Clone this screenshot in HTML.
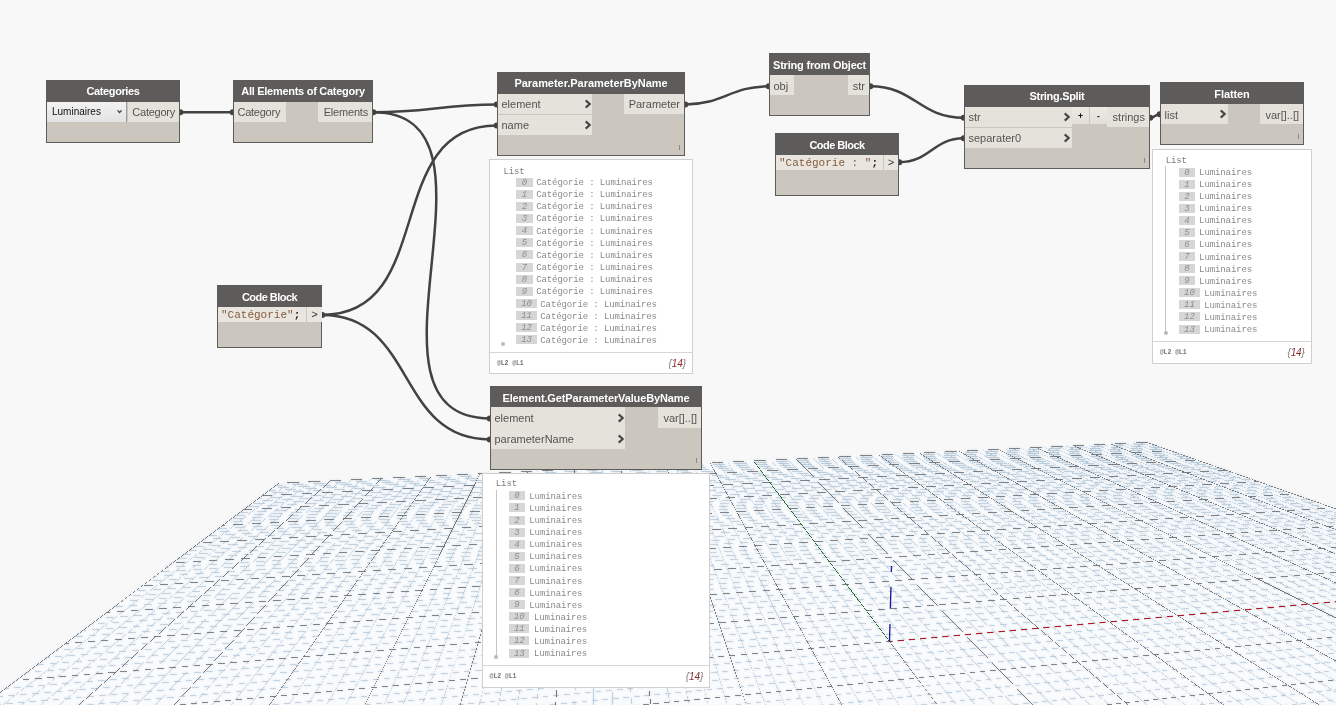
<!DOCTYPE html>
<html><head><meta charset="utf-8"><title>Dynamo</title><style>
html,body{margin:0;padding:0;}
body{width:1336px;height:705px;overflow:hidden;background:#f8f8f8;position:relative;font-family:"Liberation Sans",sans-serif;}
.abs{position:absolute;}
.node{will-change:transform;position:absolute;background:#cbc6be;border:1px solid #5e5c5a;box-sizing:border-box;}
.hdr{position:absolute;left:0;top:0;right:0;background:#5e5c5a;color:#fff;font-weight:bold;font-size:11px;text-align:center;white-space:nowrap;}
.port{position:absolute;background:#e5e2dc;color:#555350;font-size:11px;white-space:nowrap;box-sizing:border-box;}
.pin{padding-left:3.5px;}
.pout{text-align:right;padding-right:4px;}
.code{position:absolute;background:#e9e6e0;font-family:"Liberation Mono",monospace;font-size:11px;white-space:pre;color:#222;box-sizing:border-box;}
.str{color:#875a3a;}
.bub{will-change:transform;position:absolute;background:#fff;border:1px solid #cfcfcf;box-sizing:border-box;font-family:"Liberation Mono",monospace;font-size:9px;color:#8a8a8a;letter-spacing:-0.1px;}
.bub .sep{position:absolute;left:0;right:0;height:1px;background:#d6d6d6;}
.bub .t{position:absolute;white-space:pre;line-height:10px;height:10px;}
.bub .ix{position:absolute;background:#d6d6d6;color:#8e8e8e;font-style:italic;text-align:center;height:9px;line-height:11px;}
.bub .lv{position:absolute;font-weight:bold;font-size:6.5px;color:#727272;white-space:pre;}
.bub .cnt{position:absolute;font-family:"Liberation Sans",sans-serif;font-style:italic;font-size:10px;color:#777;white-space:pre;text-align:right;}
.bub .cnt b{font-weight:normal;color:#8a2d2d;}
.lace{position:absolute;width:1px;height:5px;background:#8d8a85;}
</style></head><body>
<svg class="abs" style="left:0;top:0" width="1336" height="705" shape-rendering="crispEdges"><defs><filter id="gb" x="0" y="0" width="100%" height="100%" filterUnits="userSpaceOnUse" primitiveUnits="userSpaceOnUse"><feGaussianBlur stdDeviation="0.8" result="b"/><feComposite in="SourceGraphic" in2="b" operator="arithmetic" k1="0" k2="0.5" k3="0.5" k4="0"/></filter><filter id="gb2" x="0" y="0" width="100%" height="100%" filterUnits="userSpaceOnUse" primitiveUnits="userSpaceOnUse"><feGaussianBlur stdDeviation="0.8" result="b"/><feComposite in="SourceGraphic" in2="b" operator="arithmetic" k1="0" k2="0.75" k3="0.25" k4="0"/></filter></defs><g filter="url(#gb)"><polygon points="278.9,483.2 1146.7,442.3 1340,510.7 1340,710 -4,710 -4,696.3" fill="#f9fbfd" shape-rendering="auto"/><path fill="#a0bbd0" stroke="none" d="M-6.52 711.74L289.23 482.45L289.57 482.89L-6.18 712.18ZM12.89 711.69L299.64 481.96L299.98 482.39L13.23 712.12ZM32.29 711.64L310.00 481.48L310.35 481.90L32.64 712.06ZM51.69 711.59L320.32 480.99L320.68 481.41L52.05 712.01ZM90.23 711.72L340.84 480.03L341.21 480.44L90.60 712.13ZM109.63 711.67L351.03 479.56L351.41 479.95L110.01 712.07ZM129.03 711.62L361.18 479.08L361.57 479.47L129.41 712.01ZM148.20 711.81L371.29 478.61L371.69 478.99L148.59 712.19ZM186.99 711.71L391.39 477.67L391.80 478.03L187.40 712.07ZM206.38 711.66L401.38 477.21L401.80 477.56L206.80 712.01ZM225.76 711.61L411.33 476.74L411.76 477.08L226.19 711.95ZM244.97 711.80L421.23 476.28L421.67 476.61L245.41 712.13ZM283.75 711.70L440.93 475.37L441.39 475.67L284.20 712.01ZM303.13 711.66L450.72 474.91L451.18 475.20L303.59 711.95ZM322.37 711.84L460.47 474.46L460.94 474.74L322.85 712.12ZM341.76 711.80L470.18 474.01L470.66 474.27L342.24 712.06ZM380.51 711.71L489.49 473.12L489.99 473.34L381.01 711.93ZM399.79 711.89L499.08 472.67L499.59 472.88L400.30 712.10ZM419.17 711.85L508.64 472.23L509.16 472.42L419.69 712.04ZM438.55 711.81L518.16 471.79L518.68 471.97L439.07 711.98ZM477.29 711.72L537.09 470.92L537.63 471.05L477.83 711.85ZM496.61 711.91L546.50 470.49L547.04 470.60L497.15 712.02ZM515.98 711.87L555.88 470.06L556.42 470.15L516.53 711.96ZM535.36 711.82L565.21 469.63L565.76 469.70L535.90 711.89ZM574.08 711.97L583.78 468.78L584.33 468.80L574.63 711.99ZM593.45 711.93L593.01 468.35L593.56 468.35L594.00 711.93ZM612.82 711.89L602.21 467.93L602.76 467.91L613.36 711.86ZM632.18 711.85L611.37 467.51L611.91 467.46L632.73 711.80ZM670.94 711.99L629.58 466.68L630.12 466.58L671.48 711.90ZM690.30 711.95L638.64 466.26L639.17 466.15L690.84 711.84ZM1323.59 711.69L1343.58 709.36L1343.65 709.91L1323.66 712.24ZM709.66 711.91L647.66 465.85L648.19 465.71L710.20 711.77ZM1229.06 711.72L1343.69 698.68L1343.75 699.23L1229.12 712.26ZM729.02 711.87L656.65 465.43L657.17 465.28L729.55 711.71ZM1134.96 711.70L1343.78 688.48L1343.84 689.03L1135.02 712.25ZM767.82 712.01L674.52 464.61L675.03 464.42L768.33 711.82ZM946.39 711.71L1343.96 669.41L1344.02 669.96L946.45 712.25ZM787.17 711.97L683.40 464.20L683.91 463.99L787.68 711.75ZM852.36 711.69L1343.68 660.51L1343.74 661.06L852.42 712.23ZM806.53 711.92L692.25 463.79L692.75 463.56L807.03 711.69ZM757.90 711.71L1343.77 651.95L1343.83 652.50L757.96 712.26ZM826.00 712.11L701.07 463.39L701.56 463.14L826.49 711.86ZM663.92 711.69L1343.86 643.73L1343.91 644.28L663.97 712.24ZM864.71 712.02L718.61 462.58L719.08 462.30L865.18 711.74ZM475.55 711.70L1343.68 628.29L1343.74 628.84L475.60 712.25ZM884.06 711.97L727.33 462.17L727.80 461.88L884.52 711.68ZM381.64 711.68L1343.77 620.99L1343.82 621.54L381.70 712.23ZM903.40 711.93L736.02 461.77L736.47 461.46L903.86 711.62ZM287.25 711.71L1343.85 613.97L1343.90 614.52L287.30 712.26ZM922.91 712.11L744.67 461.37L745.12 461.05L923.36 711.79ZM193.39 711.69L1343.92 607.21L1343.97 607.76L193.44 712.24ZM961.61 712.02L761.88 460.57L762.31 460.23L962.04 711.67ZM5.21 711.70L1343.76 594.43L1343.81 594.98L5.26 712.25ZM980.95 711.97L770.44 460.17L770.86 459.82L981.37 711.61ZM-7.89 704.73L1343.83 588.36L1343.88 588.91L-7.84 705.28ZM1000.49 712.15L778.96 459.78L779.37 459.41L1000.90 711.79ZM-5.79 696.72L1343.90 582.50L1343.95 583.05L-5.75 697.27ZM1019.83 712.10L787.45 459.38L787.86 459.01L1020.24 711.73ZM5.54 688.21L1343.97 576.84L1344.02 577.39L5.59 688.76ZM1058.51 712.00L804.35 458.60L804.73 458.21L1058.90 711.62ZM26.97 672.12L1343.82 566.09L1343.87 566.64L27.01 672.66ZM1078.09 712.19L812.74 458.20L813.13 457.81L1078.47 711.79ZM37.11 664.50L1343.89 560.97L1343.93 561.52L37.15 665.05ZM1097.43 712.14L821.11 457.81L821.48 457.41L1097.80 711.73ZM46.89 657.16L1343.95 556.00L1344.00 556.55L46.93 657.71ZM1116.76 712.09L829.45 457.42L829.81 457.01L1117.13 711.68ZM56.33 650.07L1343.75 551.21L1343.79 551.76L56.37 650.61ZM1155.42 711.99L846.03 456.65L846.38 456.23L1155.77 711.56ZM74.27 636.59L1343.88 542.03L1343.92 542.58L74.31 637.14ZM1175.04 712.17L854.27 456.26L854.62 455.83L1175.38 711.74ZM82.79 630.19L1343.94 537.64L1343.98 538.19L82.83 630.74ZM1194.37 712.12L862.49 455.88L862.83 455.44L1194.70 711.68ZM91.04 623.99L1343.75 533.40L1343.78 533.95L91.08 624.54ZM1213.69 712.07L870.67 455.50L871.00 455.06L1214.02 711.63ZM99.03 618.00L1343.81 529.26L1343.85 529.81L99.07 618.54ZM1252.67 712.20L886.95 454.74L887.27 454.29L1252.98 711.75ZM114.27 606.55L1343.92 521.33L1343.96 521.88L114.31 607.10ZM1271.99 712.15L895.05 454.36L895.36 453.90L1272.30 711.69ZM121.54 601.09L1343.98 517.53L1344.02 518.08L121.58 601.64ZM1291.31 712.10L903.11 453.98L903.42 453.52L1291.62 711.64ZM128.59 595.79L1343.80 513.86L1343.84 514.40L128.63 596.34ZM1310.63 712.04L911.15 453.60L911.45 453.14L1310.93 711.58ZM135.44 590.65L1341.08 510.44L1341.12 510.99L135.48 591.20ZM1343.64 708.49L927.13 452.85L927.42 452.38L1343.92 708.02ZM148.54 580.81L1324.51 504.61L1324.54 505.16L148.58 581.36ZM1343.83 697.09L935.08 452.48L935.37 452.01L1344.11 696.62ZM154.82 576.10L1316.49 501.79L1316.53 502.34L154.85 576.65ZM1343.66 686.03L943.00 452.11L943.28 451.63L1343.94 685.55ZM160.92 571.52L1308.65 499.03L1308.69 499.58L160.95 572.07ZM1343.85 675.70L950.90 451.74L951.17 451.26L1344.12 675.22ZM166.85 567.07L1300.98 496.33L1301.01 496.88L166.88 567.61ZM1343.86 656.25L966.59 451.00L966.86 450.52L1344.13 655.77ZM178.24 558.51L1286.12 491.10L1286.15 491.65L178.27 559.06ZM1343.71 647.09L974.40 450.64L974.66 450.15L1343.97 646.60ZM183.70 554.41L1278.92 488.56L1278.95 489.11L183.74 554.96ZM1343.56 638.33L982.18 450.27L982.44 449.78L1343.82 637.84ZM189.03 550.41L1271.87 486.08L1271.90 486.63L189.06 550.96ZM1343.73 630.10L989.93 449.91L990.18 449.42L1343.98 629.61ZM194.22 546.51L1264.96 483.65L1264.99 484.20L194.25 547.06ZM1343.75 614.49L1005.35 449.18L1005.60 448.69L1343.99 614.00ZM204.21 539.01L1251.55 478.93L1251.59 479.48L204.24 539.56ZM1343.61 607.09L1013.02 448.82L1013.26 448.33L1343.85 606.59ZM209.02 535.40L1245.05 476.65L1245.08 477.19L209.05 535.94ZM1343.77 600.11L1020.67 448.46L1020.90 447.96L1344.00 599.61ZM213.71 531.87L1238.68 474.40L1238.71 474.95L213.74 532.42ZM1343.64 593.27L1028.28 448.10L1028.51 447.60L1343.87 592.77ZM218.29 528.43L1232.42 472.20L1232.45 472.75L218.32 528.98ZM1343.66 580.47L1043.43 447.39L1043.65 446.89L1343.88 579.97ZM227.12 521.80L1220.28 467.92L1220.31 468.47L227.15 522.35ZM1343.80 574.48L1050.97 447.04L1051.19 446.53L1344.02 573.98ZM231.38 518.60L1214.37 465.85L1214.40 466.40L231.41 519.15ZM1343.68 568.59L1058.47 446.69L1058.69 446.18L1343.89 568.08ZM235.54 515.47L1208.58 463.81L1208.61 464.36L235.57 516.02ZM1343.81 563.01L1065.96 446.33L1066.17 445.83L1344.03 562.51ZM239.61 512.42L1202.90 461.81L1202.92 462.36L239.64 512.97ZM1343.83 552.32L1080.84 445.63L1081.05 445.12L1344.03 551.81ZM247.48 506.51L1191.83 457.91L1191.86 458.46L247.51 507.06ZM1343.71 547.20L1088.25 445.29L1088.45 444.77L1343.92 546.69ZM251.28 503.65L1186.45 456.02L1186.48 456.57L251.31 504.20ZM1343.84 542.33L1095.63 444.94L1095.83 444.43L1344.04 541.82ZM255.00 500.86L1181.17 454.16L1181.19 454.71L255.03 501.41ZM1343.73 537.53L1102.98 444.59L1103.18 444.08L1343.93 537.02ZM258.64 498.13L1175.97 452.33L1176.00 452.88L258.67 498.68ZM1343.74 528.47L1117.61 443.91L1117.80 443.39L1343.94 527.96ZM265.69 492.83L1165.86 448.77L1165.88 449.32L265.72 493.38ZM1343.86 524.19L1124.89 443.56L1125.08 443.05L1344.05 523.68ZM269.11 490.27L1160.93 447.04L1160.96 447.59L269.13 490.82ZM1343.76 519.96L1132.14 443.22L1132.32 442.70L1343.94 519.44ZM272.45 487.76L1156.09 445.33L1156.11 445.88L272.48 488.31ZM1343.87 515.94L1139.36 442.88L1139.55 442.36L1344.06 515.42ZM275.73 485.30L1151.33 443.66L1151.35 444.21L275.75 485.85Z"/></g><g filter="url(#gb2)"><path fill="#646c72" stroke="none" d="M1040.45 711.74L1343.88 678.75L1343.93 679.27L1040.50 712.26ZM569.48 711.73L1343.94 635.85L1343.99 636.38L569.53 712.26ZM99.03 711.73L1343.68 600.73L1343.73 601.26L99.07 712.26ZM16.45 680.02L1343.76 571.40L1343.80 571.93L16.50 680.55ZM65.45 643.23L1343.81 546.56L1343.85 547.09L65.49 643.75ZM106.77 612.19L1343.87 525.25L1343.90 525.78L106.81 612.72ZM142.09 585.67L1332.70 507.50L1332.73 508.03L142.12 586.20ZM172.62 562.74L1293.47 493.70L1293.50 494.23L172.65 563.27ZM199.28 542.72L1258.19 481.28L1258.22 481.81L199.31 543.25ZM222.76 525.09L1226.29 470.05L1226.32 470.58L222.79 525.62ZM243.59 509.44L1197.31 459.85L1197.34 460.38L243.62 509.97ZM262.21 495.46L1170.87 450.55L1170.90 451.08L262.23 495.99ZM278.94 482.90L1146.65 442.02L1146.67 442.55L278.96 483.43Z"/><path fill="#565e64" stroke="none" d="M-7.97 698.29L278.78 482.94L279.12 483.38L-7.63 698.74ZM70.83 711.77L330.60 480.51L330.97 480.93L71.20 712.19ZM167.59 711.75L381.36 478.14L381.77 478.52L168.00 712.13ZM264.36 711.75L431.10 475.82L431.55 476.14L264.81 712.07ZM361.13 711.75L479.85 473.56L480.35 473.81L361.63 712.00ZM457.92 711.76L527.64 471.35L528.18 471.51L458.45 711.92ZM554.72 711.78L574.51 469.20L575.07 469.25L555.28 711.83ZM651.54 711.80L620.49 467.09L621.04 467.02L652.09 711.73ZM748.45 712.06L665.59 465.02L666.12 464.84L748.98 711.88ZM845.35 712.07L709.85 462.98L710.35 462.72L845.84 711.80ZM942.26 712.07L753.29 460.97L753.73 460.64L942.70 711.73ZM1039.17 712.06L795.91 458.99L796.32 458.60L1039.58 711.67ZM1136.09 712.04L837.75 457.04L838.12 456.61L1136.45 711.62ZM1233.02 712.02L878.82 455.12L879.15 454.67L1233.34 711.57ZM1330.31 712.23L919.15 453.23L919.45 452.76L1330.61 711.75ZM1343.69 665.66L958.76 451.37L959.03 450.88L1343.96 665.17ZM1343.59 622.06L997.66 449.55L997.90 449.05L1343.84 621.56ZM1343.78 586.82L1035.87 447.75L1036.10 447.24L1344.01 586.31ZM1343.69 557.53L1073.41 445.99L1073.62 445.47L1343.91 557.01ZM1343.85 532.98L1110.30 444.25L1110.50 443.73L1344.05 532.46ZM1343.77 511.96L1146.56 442.55L1146.75 442.02L1343.95 511.43Z"/></g><path fill="#1f6428" d="M889.25 641.69L753.26 460.99L753.76 460.62L889.75 641.31Z"/><path d="M889.50 641.50L1343.86 600.98" stroke-dasharray="6.329 4.928" stroke-dashoffset="3.165" stroke="#b8101f" stroke-width="1.15" shape-rendering="auto"/><path d="M889.5 641.5L891.5 566" stroke="#1c1ca0" stroke-width="1.35" fill="none" stroke-dasharray="17.5 15.5 21.5 15 6.5 0" shape-rendering="auto"/></svg>
<svg class="abs" style="left:0;top:0" width="1336" height="705"><g fill="none" stroke="#424242" stroke-width="2.5" stroke-linecap="round"><path d="M180.3 112.2C203.9 112.2 209.1 112.2 232.7 112.2"/><path d="M373.3 112.2C428.9 112.2 441.1 104.6 496.7 104.6"/><path d="M373.3 112.2C520.7 112.2 342.3 418.4 489.7 418.4"/><path d="M322.3 314.9C438.1 314.9 380.9 125.6 496.7 125.6"/><path d="M322.3 314.9C416.2 314.9 395.8 439.4 489.7 439.4"/><path d="M685.3 104.4C723.7 104.4 730.3 86.3 768.7 86.3"/><path d="M870.3 86.3C914.7 86.3 919.3 117.8 963.7 117.8"/><path d="M899.3 162.2C930.2 162.2 932.8 138.3 963.7 138.3"/><path d="M1150.3 117.8C1154.8 117.8 1155.2 114.3 1159.7 114.3"/></g><g fill="#424242"><circle cx="1150.3" cy="117.8" r="3"/><circle cx="322.3" cy="314.9" r="3"/><circle cx="232.7" cy="112.2" r="3"/><circle cx="496.7" cy="125.6" r="3"/><circle cx="489.7" cy="439.4" r="3"/><circle cx="963.7" cy="117.8" r="3"/><circle cx="899.3" cy="162.2" r="3"/><circle cx="963.7" cy="138.3" r="3"/><circle cx="685.3" cy="104.4" r="3"/><circle cx="870.3" cy="86.3" r="3"/><circle cx="180.3" cy="112.2" r="3"/><circle cx="496.7" cy="104.6" r="3"/><circle cx="768.7" cy="86.3" r="3"/><circle cx="1159.7" cy="114.3" r="3"/><circle cx="489.7" cy="418.4" r="3"/><circle cx="373.3" cy="112.2" r="3"/></g></svg>
<div class="node" style="left:46px;top:80px;width:134px;height:63px"><div class="hdr" style="height:21px;line-height:21px;letter-spacing:-0.38px">Categories</div><div class="port pout" style="right:0;top:21px;width:51px;height:20px;line-height:20px"><span style="letter-spacing:-0.25px">Category</span></div><div class="abs" style="left:0;top:21px;width:80px;height:20px;background:linear-gradient(#f2f2f2,#e3e3e3);border-right:1px solid #a29e97;box-sizing:border-box;font-size:10px;line-height:19px;color:#111;padding-left:5px;white-space:nowrap">Luminaires<svg class="abs" style="left:69px;top:7px" width="7" height="6" viewBox="0 0 7 6"><path d="M1.6 1.4 L3.6 3.5 L5.6 1.4" fill="none" stroke="#3c3c3c" stroke-width="1.25"/></svg></div></div>
<div class="node" style="left:233px;top:80px;width:140px;height:63px"><div class="hdr" style="height:21px;line-height:21px;letter-spacing:-0.28px">All Elements of Category</div><div class="port pin" style="left:0;top:21px;width:52px;height:20px;line-height:20px"><span style="letter-spacing:-0.25px">Category</span></div><div class="port pout" style="right:0;top:21px;width:54px;height:20px;line-height:20px"><span style="letter-spacing:-0.2px">Elements</span></div></div>
<div class="node" style="left:497px;top:72px;width:188px;height:84px"><div class="hdr" style="height:21px;line-height:21px;letter-spacing:-0.04px">Parameter.ParameterByName</div><div class="port pin" style="left:0;top:21px;width:94px;height:20px;line-height:20px">element</div><svg class="abs" style="left:86px;top:26px" width="8" height="10" viewBox="0 0 8 10"><path d="M1.7 1.4 L5.7 5 L1.7 8.6" fill="none" stroke="#474543" stroke-width="2.1"/></svg><div class="port pin" style="left:0;top:42px;width:94px;height:20px;line-height:20px">name</div><svg class="abs" style="left:86px;top:47px" width="8" height="10" viewBox="0 0 8 10"><path d="M1.7 1.4 L5.7 5 L1.7 8.6" fill="none" stroke="#474543" stroke-width="2.1"/></svg><div class="port pout" style="right:0;top:21px;width:60px;height:20px;line-height:20px">Parameter</div><div class="lace" style="left:181px;top:72px"></div></div>
<div class="node" style="left:769px;top:53px;width:101px;height:63px"><div class="hdr" style="height:21px;line-height:23px;letter-spacing:-0.20px">String from Object</div><div class="port pin" style="left:0;top:21px;width:24px;height:20px;line-height:22px">obj</div><div class="port pout" style="right:0;top:21px;width:21px;height:20px;line-height:22px">str</div></div>
<div class="node" style="left:775px;top:133px;width:124px;height:63px"><div class="hdr" style="height:21px;line-height:23px;letter-spacing:-0.53px">Code Block</div><div class="code" style="left:0;top:21px;width:107px;height:15px;line-height:17px;padding-left:3px;overflow:hidden"><span class="str">"Catégorie : "</span><b>;</b></div><div class="code" style="left:108px;top:21px;width:14px;height:15px;line-height:17px;text-align:center;color:#333;overflow:hidden">&gt;</div></div>
<div class="node" style="left:964px;top:85px;width:186px;height:84px"><div class="hdr" style="height:21px;line-height:21px;letter-spacing:-0.31px">String.Split</div><div class="port pin" style="left:0;top:21px;width:107px;height:20px;line-height:20px">str</div><svg class="abs" style="left:98px;top:26px" width="8" height="10" viewBox="0 0 8 10"><path d="M1.7 1.4 L5.7 5 L1.7 8.6" fill="none" stroke="#474543" stroke-width="2.1"/></svg><div class="port pin" style="left:0;top:42px;width:107px;height:20px;line-height:20px">separater0</div><svg class="abs" style="left:98px;top:47px" width="8" height="10" viewBox="0 0 8 10"><path d="M1.7 1.4 L5.7 5 L1.7 8.6" fill="none" stroke="#474543" stroke-width="2.1"/></svg><div class="port pout" style="right:0;top:21px;width:42px;height:20px;line-height:20px">strings</div><div class="port" style="left:107px;top:21px;width:17px;height:17px;line-height:18px;text-align:center;color:#111;background:linear-gradient(#eceae5,#e2dfd9);font-size:8.5px;font-weight:bold">+</div><div class="port" style="left:125px;top:21px;width:17px;height:17px;line-height:18px;text-align:center;color:#111;background:linear-gradient(#eceae5,#e2dfd9);font-size:8.5px;font-weight:bold">-</div><div class="lace" style="left:179px;top:72px"></div></div>
<div class="node" style="left:1160px;top:82px;width:144px;height:63px"><div class="hdr" style="height:21px;line-height:23px;letter-spacing:-0.10px">Flatten</div><div class="port pin" style="left:0;top:21px;width:67px;height:20px;line-height:22px">list</div><svg class="abs" style="left:58px;top:26px" width="8" height="10" viewBox="0 0 8 10"><path d="M1.7 1.4 L5.7 5 L1.7 8.6" fill="none" stroke="#474543" stroke-width="2.1"/></svg><div class="port pout" style="right:0;top:21px;width:43px;height:20px;line-height:22px">var[]..[]</div><div class="lace" style="left:137px;top:51px"></div></div>
<div class="node" style="left:217px;top:285px;width:105px;height:63px"><div class="hdr" style="height:21px;line-height:23px;letter-spacing:-0.53px">Code Block</div><div class="code" style="left:0;top:21px;width:88px;height:15px;line-height:16px;padding-left:3px"><span class="str">"Catégorie"</span><b>;</b></div><div class="code" style="left:89px;top:21px;width:15px;height:15px;line-height:16px;text-align:center;color:#333">&gt;</div></div>
<div class="node" style="left:490px;top:386px;width:212px;height:84px"><div class="hdr" style="height:20px;line-height:22px;letter-spacing:-0.12px">Element.GetParameterValueByName</div><div class="port pin" style="left:0;top:20px;width:134px;height:21px;line-height:23px">element</div><svg class="abs" style="left:126px;top:26px" width="8" height="10" viewBox="0 0 8 10"><path d="M1.7 1.4 L5.7 5 L1.7 8.6" fill="none" stroke="#474543" stroke-width="2.1"/></svg><div class="port pin" style="left:0;top:41px;width:134px;height:21px;line-height:23px">parameterName</div><svg class="abs" style="left:126px;top:47px" width="8" height="10" viewBox="0 0 8 10"><path d="M1.7 1.4 L5.7 5 L1.7 8.6" fill="none" stroke="#474543" stroke-width="2.1"/></svg><div class="port pout" style="right:0;top:20px;width:43px;height:21px;line-height:23px">var[]..[]</div><div class="lace" style="left:205px;top:71px"></div></div>
<div class="bub" style="left:489px;top:159px;width:204px;height:215px"><div class="sep" style="top:192px"></div><div class="t" style="left:13.4px;top:6.7px;color:#7c7c7c">List</div><div class="abs" style="left:11.0px;top:181.8px;width:4px;height:4px;border-radius:2px;background:#b9b9b9"></div><div class="ix" style="left:26.2px;top:18px;width:16.5px">0</div><div class="t" style="left:46.2px;top:18px">Catégorie : Luminaires</div><div class="ix" style="left:26.2px;top:30px;width:16.5px">1</div><div class="t" style="left:46.2px;top:30px">Catégorie : Luminaires</div><div class="ix" style="left:26.2px;top:42px;width:16.5px">2</div><div class="t" style="left:46.2px;top:42px">Catégorie : Luminaires</div><div class="ix" style="left:26.2px;top:54px;width:16.5px">3</div><div class="t" style="left:46.2px;top:54px">Catégorie : Luminaires</div><div class="ix" style="left:26.2px;top:66px;width:16.5px">4</div><div class="t" style="left:46.2px;top:67px">Catégorie : Luminaires</div><div class="ix" style="left:26.2px;top:78px;width:16.5px">5</div><div class="t" style="left:46.2px;top:79px">Catégorie : Luminaires</div><div class="ix" style="left:26.2px;top:90px;width:16.5px">6</div><div class="t" style="left:46.2px;top:91px">Catégorie : Luminaires</div><div class="ix" style="left:26.2px;top:103px;width:16.5px">7</div><div class="t" style="left:46.2px;top:103px">Catégorie : Luminaires</div><div class="ix" style="left:26.2px;top:115px;width:16.5px">8</div><div class="t" style="left:46.2px;top:115px">Catégorie : Luminaires</div><div class="ix" style="left:26.2px;top:127px;width:16.5px">9</div><div class="t" style="left:46.2px;top:127px">Catégorie : Luminaires</div><div class="ix" style="left:26.2px;top:139px;width:20.6px">10</div><div class="t" style="left:50.3px;top:140px">Catégorie : Luminaires</div><div class="ix" style="left:26.2px;top:151px;width:20.6px">11</div><div class="t" style="left:50.3px;top:152px">Catégorie : Luminaires</div><div class="ix" style="left:26.2px;top:163px;width:20.6px">12</div><div class="t" style="left:50.3px;top:164px">Catégorie : Luminaires</div><div class="ix" style="left:26.2px;top:175px;width:20.6px">13</div><div class="t" style="left:50.3px;top:176px">Catégorie : Luminaires</div><div class="lv" style="left:7.0px;top:199.3px;line-height:9px"><span style="color:#8e8e8e">@</span>L2 <span style="color:#8e8e8e">@</span>L1</div><div class="cnt" style="right:6.0px;top:196.7px;line-height:13px">{<b>14</b>}</div></div>
<div class="bub" style="left:1152px;top:149px;width:160px;height:215px"><div class="sep" style="top:191px"></div><div class="t" style="left:12.7px;top:5.8px;color:#7c7c7c">List</div><div class="abs" style="left:12px;top:16px;width:1px;height:167px;background:#c4c4c4"></div><div class="abs" style="left:10.9px;top:180.6px;width:4px;height:4px;border-radius:2px;background:#b9b9b9"></div><div class="ix" style="left:26.0px;top:18px;width:15.6px">0</div><div class="t" style="left:46.1px;top:18px">Luminaires</div><div class="ix" style="left:26.0px;top:30px;width:15.6px">1</div><div class="t" style="left:46.1px;top:30px">Luminaires</div><div class="ix" style="left:26.0px;top:42px;width:15.6px">2</div><div class="t" style="left:46.1px;top:42px">Luminaires</div><div class="ix" style="left:26.0px;top:54px;width:15.6px">3</div><div class="t" style="left:46.1px;top:54px">Luminaires</div><div class="ix" style="left:26.0px;top:66px;width:15.6px">4</div><div class="t" style="left:46.1px;top:66px">Luminaires</div><div class="ix" style="left:26.0px;top:78px;width:15.6px">5</div><div class="t" style="left:46.1px;top:78px">Luminaires</div><div class="ix" style="left:26.0px;top:90px;width:15.6px">6</div><div class="t" style="left:46.1px;top:90px">Luminaires</div><div class="ix" style="left:26.0px;top:102px;width:15.6px">7</div><div class="t" style="left:46.1px;top:103px">Luminaires</div><div class="ix" style="left:26.0px;top:114px;width:15.6px">8</div><div class="t" style="left:46.1px;top:115px">Luminaires</div><div class="ix" style="left:26.0px;top:126px;width:15.6px">9</div><div class="t" style="left:46.1px;top:127px">Luminaires</div><div class="ix" style="left:26.0px;top:138px;width:20.8px">10</div><div class="t" style="left:51.3px;top:139px">Luminaires</div><div class="ix" style="left:26.0px;top:150px;width:20.8px">11</div><div class="t" style="left:51.3px;top:151px">Luminaires</div><div class="ix" style="left:26.0px;top:162px;width:20.8px">12</div><div class="t" style="left:51.3px;top:163px">Luminaires</div><div class="ix" style="left:26.0px;top:175px;width:20.8px">13</div><div class="t" style="left:51.3px;top:175px">Luminaires</div><div class="lv" style="left:6.8px;top:198.1px;line-height:9px"><span style="color:#8e8e8e">@</span>L2 <span style="color:#8e8e8e">@</span>L1</div><div class="cnt" style="right:6.2px;top:195.8px;line-height:13px">{<b>14</b>}</div></div>
<div class="bub" style="left:482px;top:473px;width:228px;height:215px"><div class="sep" style="top:191px"></div><div class="t" style="left:12.8px;top:5.4px;color:#7c7c7c">List</div><div class="abs" style="left:13px;top:16px;width:1px;height:167px;background:#c4c4c4"></div><div class="abs" style="left:11.2px;top:181.1px;width:4px;height:4px;border-radius:2px;background:#b9b9b9"></div><div class="ix" style="left:25.9px;top:17px;width:15.9px">0</div><div class="t" style="left:46.3px;top:18px">Luminaires</div><div class="ix" style="left:25.9px;top:29px;width:15.9px">1</div><div class="t" style="left:46.3px;top:30px">Luminaires</div><div class="ix" style="left:25.9px;top:42px;width:15.9px">2</div><div class="t" style="left:46.3px;top:42px">Luminaires</div><div class="ix" style="left:25.9px;top:54px;width:15.9px">3</div><div class="t" style="left:46.3px;top:54px">Luminaires</div><div class="ix" style="left:25.9px;top:66px;width:15.9px">4</div><div class="t" style="left:46.3px;top:66px">Luminaires</div><div class="ix" style="left:25.9px;top:78px;width:15.9px">5</div><div class="t" style="left:46.3px;top:78px">Luminaires</div><div class="ix" style="left:25.9px;top:90px;width:15.9px">6</div><div class="t" style="left:46.3px;top:90px">Luminaires</div><div class="ix" style="left:25.9px;top:102px;width:15.9px">7</div><div class="t" style="left:46.3px;top:103px">Luminaires</div><div class="ix" style="left:25.9px;top:114px;width:15.9px">8</div><div class="t" style="left:46.3px;top:115px">Luminaires</div><div class="ix" style="left:25.9px;top:126px;width:15.9px">9</div><div class="t" style="left:46.3px;top:127px">Luminaires</div><div class="ix" style="left:25.9px;top:138px;width:20.6px">10</div><div class="t" style="left:51.0px;top:139px">Luminaires</div><div class="ix" style="left:25.9px;top:150px;width:20.6px">11</div><div class="t" style="left:51.0px;top:151px">Luminaires</div><div class="ix" style="left:25.9px;top:162px;width:20.6px">12</div><div class="t" style="left:51.0px;top:163px">Luminaires</div><div class="ix" style="left:25.9px;top:175px;width:20.6px">13</div><div class="t" style="left:51.0px;top:175px">Luminaires</div><div class="lv" style="left:6.6px;top:198.3px;line-height:9px"><span style="color:#8e8e8e">@</span>L2 <span style="color:#8e8e8e">@</span>L1</div><div class="cnt" style="right:5.8px;top:196.0px;line-height:13px">{<b>14</b>}</div></div>
</body></html>
